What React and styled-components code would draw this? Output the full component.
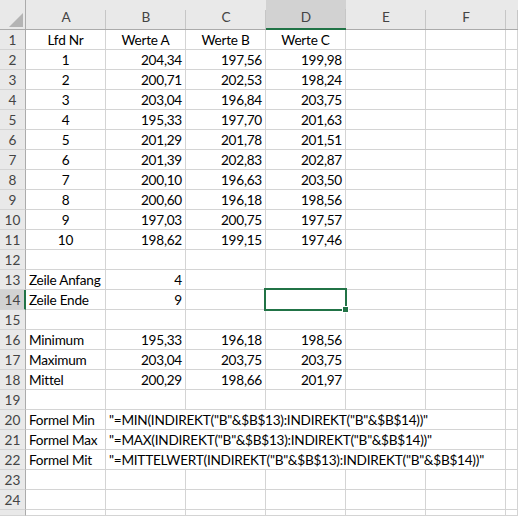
import React from "react";
import styled, { createGlobalStyle, css } from "styled-components";

const GREEN = "#217346";

const Global = createGlobalStyle`
  html, body { margin: 0; padding: 0; background: #fff; }
  body { font-family: "Lato", "Liberation Sans", sans-serif; overflow: hidden; }
`;

const Sheet = styled.div`
  display: grid;
  grid-template-columns: 26px repeat(6, 80px) 1fr;
  grid-template-rows: 30px repeat(24, 20px) 1fr;
  width: 518px;
  height: 516px;
  font-size: 13.6px;
  letter-spacing: -0.25px;
  color: #000;
`;

const Corner = styled.div`
  box-sizing: border-box;
  background: #e9e9e9;
  border-right: 1px solid #ababab;
  border-bottom: 1px solid #ababab;
  display: flex;
  align-items: flex-end;
  justify-content: flex-end;
  padding: 0 1px 1px 0;
`;

const ColHeader = styled.div`
  box-sizing: border-box;
  display: flex;
  align-items: flex-end;
  justify-content: center;
  padding-bottom: 4px;
  color: #444;
  letter-spacing: 0;
  border-bottom: 1px solid #ababab;
  background:
    linear-gradient(#c6c6c6, #c6c6c6) right bottom / 1px 19px no-repeat,
    #e9e9e9;
  ${(p) =>
    p.$active &&
    css`
      background:
        linear-gradient(#c6c6c6, #c6c6c6) right bottom / 1px 19px no-repeat,
        #d2d2d2;
      border-bottom: 2px solid ${GREEN};
      padding-bottom: 3px;
    `}
`;

const RowHeader = styled.div`
  box-sizing: border-box;
  display: flex;
  align-items: center;
  justify-content: center;
  color: #444;
  letter-spacing: 0;
  background: #e9e9e9;
  border-right: 1px solid #ababab;
  border-bottom: 1px solid #d4d4d4;
  ${(p) =>
    p.$active &&
    css`
      background: #d2d2d2;
      border-right: 2px solid ${GREEN};
      padding-left: 1px;
    `}
`;

const Cell = styled.div`
  box-sizing: border-box;
  position: relative;
  display: flex;
  align-items: center;
  padding: 1px 3px 0;
  white-space: nowrap;
  border-right: 1px solid #d4d4d4;
  border-bottom: 1px solid #d4d4d4;
  grid-column: ${(p) => (p.$span ? `span ${p.$span}` : "auto")};
  justify-content: ${(p) =>
    p.$align === "right" ? "flex-end" : p.$align === "center" ? "center" : "flex-start"};
  ${(p) =>
    p.$selected &&
    css`
      &::after {
        content: "";
        position: absolute;
        top: -2px;
        left: -2px;
        right: -2px;
        bottom: -2px;
        border: 2px solid ${GREEN};
        z-index: 2;
      }
      &::before {
        content: "";
        position: absolute;
        right: -4px;
        bottom: -4px;
        width: 5px;
        height: 5px;
        background: ${GREEN};
        border: 1px solid #fff;
        z-index: 3;
      }
    `}
`;

const cols = ["A", "B", "C", "D", "E", "F"];

const nums = [
  ["204,34", "197,56", "199,98"],
  ["200,71", "202,53", "198,24"],
  ["203,04", "196,84", "203,75"],
  ["195,33", "197,70", "201,63"],
  ["201,29", "201,78", "201,51"],
  ["201,39", "202,83", "202,87"],
  ["200,10", "196,63", "203,50"],
  ["200,60", "196,18", "198,56"],
  ["197,03", "200,75", "197,57"],
  ["198,62", "199,15", "197,46"],
];

const stats = {
  16: ["Minimum", "195,33", "196,18", "198,56"],
  17: ["Maximum", "203,04", "203,75", "203,75"],
  18: ["Mittel", "200,29", "198,66", "201,97"],
};

const formulas = {
  20: ["Formel Min", '"=MIN(INDIREKT("B"&$B$13):INDIREKT("B"&$B$14))"'],
  21: ["Formel Max", '"=MAX(INDIREKT("B"&$B$13):INDIREKT("B"&$B$14))"'],
  22: ["Formel Mit", '"=MITTELWERT(INDIREKT("B"&$B$13):INDIREKT("B"&$B$14))"'],
};

function rowCells(r) {
  const blank = (k, extra = {}) => <Cell key={k} {...extra} />;
  if (r === 1) {
    return [
      <Cell key="a" $align="center">Lfd Nr</Cell>,
      <Cell key="b" $align="center">Werte A</Cell>,
      <Cell key="c" $align="center">Werte B</Cell>,
      <Cell key="d" $align="center">Werte C</Cell>,
      blank("e"),
      blank("f"),
      blank("g"),
    ];
  }
  if (r >= 2 && r <= 11) {
    const v = nums[r - 2];
    return [
      <Cell key="a" $align="center">{r - 1}</Cell>,
      <Cell key="b" $align="right">{v[0]}</Cell>,
      <Cell key="c" $align="right">{v[1]}</Cell>,
      <Cell key="d" $align="right">{v[2]}</Cell>,
      blank("e"),
      blank("f"),
      blank("g"),
    ];
  }
  if (r === 13 || r === 14) {
    return [
      <Cell key="a">{r === 13 ? "Zeile Anfang" : "Zeile Ende"}</Cell>,
      <Cell key="b" $align="right">{r === 13 ? "4" : "9"}</Cell>,
      blank("c"),
      blank("d", { $selected: r === 14 }),
      blank("e"),
      blank("f"),
      blank("g"),
    ];
  }
  if (stats[r]) {
    const s = stats[r];
    return [
      <Cell key="a">{s[0]}</Cell>,
      <Cell key="b" $align="right">{s[1]}</Cell>,
      <Cell key="c" $align="right">{s[2]}</Cell>,
      <Cell key="d" $align="right">{s[3]}</Cell>,
      blank("e"),
      blank("f"),
      blank("g"),
    ];
  }
  if (formulas[r]) {
    const f = formulas[r];
    return [
      <Cell key="a">{f[0]}</Cell>,
      <Cell key="b" $span={5}>{f[1]}</Cell>,
      blank("g"),
    ];
  }
  return ["a", "b", "c", "d", "e", "f", "g"].map((k) => blank(k));
}

export default function App() {
  const rows = Array.from({ length: 25 }, (_, i) => i + 1);
  return (
    <>
      <Global />
      <Sheet>
        <Corner>
          <svg width="16" height="16" viewBox="0 0 16 16">
            <polygon points="1,15 15,15 15,1" fill="#b4b4b4" />
          </svg>
        </Corner>
        {cols.map((c) => (
          <ColHeader key={c} $active={c === "D"}>
            {c}
          </ColHeader>
        ))}
        <ColHeader />
        {rows.map((r) => (
          <React.Fragment key={r}>
            <RowHeader $active={r === 14}>{r <= 24 ? r : ""}</RowHeader>
            {rowCells(r)}
          </React.Fragment>
        ))}
      </Sheet>
    </>
  );
}
